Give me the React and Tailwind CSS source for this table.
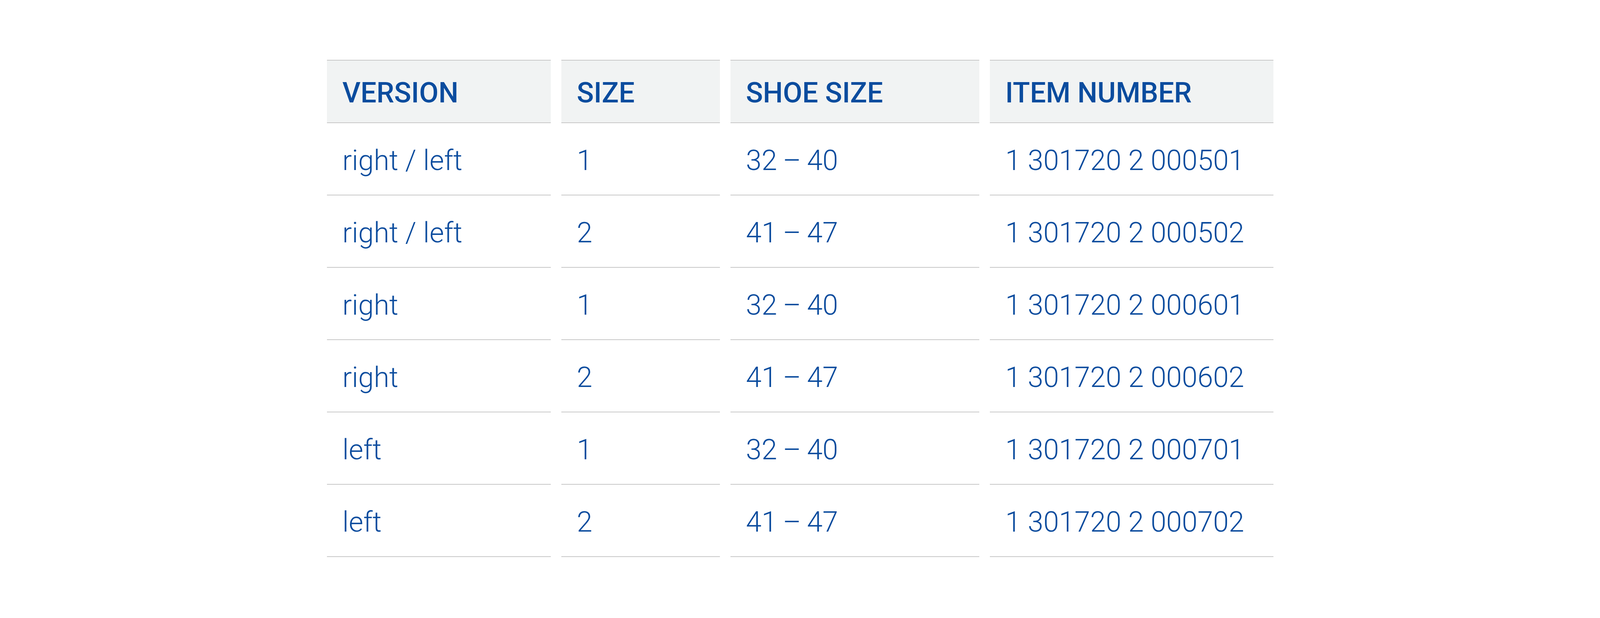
import React from "react";

const headers = ["VERSION", "SIZE", "SHOE SIZE", "ITEM NUMBER"];
const rows = [
  ["right / left", "1", "32\u2009–\u200940", "1 301720 2 000501"],
  ["right / left", "2", "41\u2009–\u200947", "1 301720 2 000502"],
  ["right", "1", "32\u2009–\u200940", "1 301720 2 000601"],
  ["right", "2", "41\u2009–\u200947", "1 301720 2 000602"],
  ["left", "1", "32\u2009–\u200940", "1 301720 2 000701"],
  ["left", "2", "41\u2009–\u200947", "1 301720 2 000702"],
];

export default function App() {
  return (
    <div
      className="w-full min-h-screen bg-white pt-[153px]"
      style={{ fontFamily: "Roboto, 'Liberation Sans', sans-serif" }}
    >
      <div className="mx-auto w-[2423px] grid grid-cols-[573px_406px_637px_726px] gap-x-[27px] text-[#0b4c9e] text-[72px]">
        {headers.map((h) => (
          <div
            key={h}
            className="h-[162px] border-y-2 border-[#c8c8c8] bg-[#f1f3f3] flex items-center pl-[40px] pt-[8px] font-medium"
          >
            {h}
          </div>
        ))}
        {rows.map((r, i) =>
          r.map((c, j) => (
            <div
              key={i + "-" + j}
              className="h-[185px] border-b-2 border-[#c8c8c8] flex items-center pl-[40px] pt-[8px] font-light whitespace-pre"
            >
              {c}
            </div>
          ))
        )}
      </div>
    </div>
  );
}
